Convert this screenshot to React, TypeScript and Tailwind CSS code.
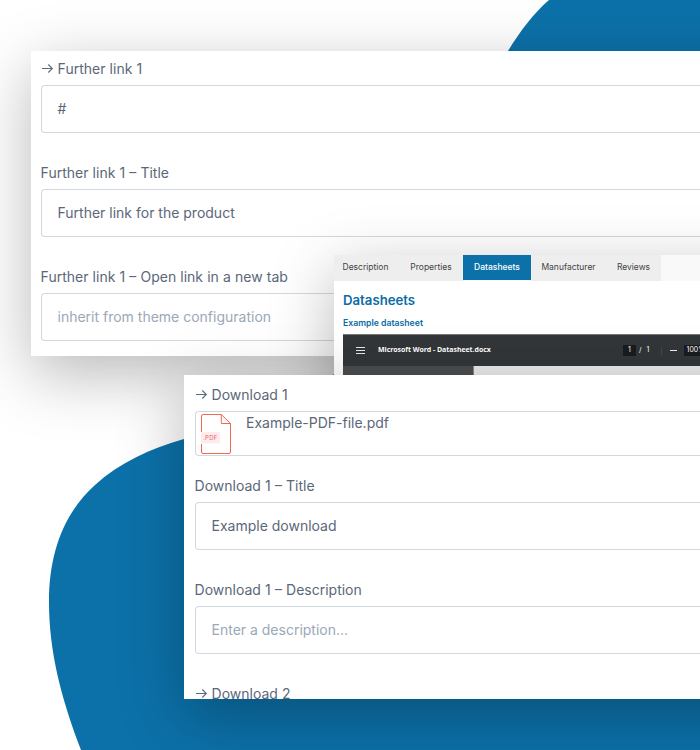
import type { ReactNode } from "react";

type FieldProps = {
  label: string;
  arrow?: boolean;
  children?: ReactNode;
};

const ArrowIcon = () => (
  <svg width="13" height="12" viewBox="0 0 13 12" fill="none" stroke="#5b6b7f" strokeWidth="1.1" className="mr-1">
    <path d="M1 6.5H11.3M7.3 2.5L11.3 6.5L7.3 10.5" />
  </svg>
);

const PdfIcon = () => (
  <svg width="30" height="40" viewBox="0 0 30 40" fill="none">
    <path
      d="M.5 18V2Q.5.5 2 .5H20.3L29.5 9.5V38Q29.5 39.5 28 39.5H2Q.5 39.5.5 38V30M20.3.5V9.5H29.5"
      stroke="#f4674f"
    />
    <rect y="18" width="19" height="11.5" fill="#fdeceb" />
    <text x="2.2" y="26" fontSize="6" letterSpacing=".2" fill="#f0616d" fontFamily="Inter, sans-serif">
      .PDF
    </text>
  </svg>
);

const Label = ({ label, arrow }: FieldProps) => (
  <div className="-ml-[0.4px] flex h-6 items-center whitespace-nowrap [word-spacing:0.2px]">
    {arrow && <ArrowIcon />}
    {label}
  </div>
);

const Field = ({ label, arrow, children }: FieldProps) => (
  <div>
    <Label label={label} arrow={arrow} />
    <div className="mt-[5px] flex h-12 items-center rounded-l border border-r-0 border-[#d1d9e0] pb-[2px] pl-[15.5px]">
      {children}
    </div>
  </div>
);

const tabs = [
  { name: "Description", width: "w-[65px] pr-[2px]" },
  { name: "Properties", width: "w-[64px]" },
  { name: "Datasheets", width: "w-[68px]" },
  { name: "Manufacturer", width: "w-[75px]" },
  { name: "Reviews", width: "w-[55px]" },
];

const LinksCard = () => (
  <section className="absolute left-[31px] top-[51px] h-[305px] w-[760px] bg-white pl-[10px] pt-[5px] shadow-[0_18px_60px_rgba(0,0,0,0.28)]">
    <div className="flex flex-col gap-[27px]">
      <Field label="Further link 1" arrow>
        #
      </Field>
      <Field label="Further link 1 – Title">Further link for the product</Field>
      <Field label="Further link 1 – Open link in a new tab">
        <span className="text-[#9aa8b8]">inherit from theme configuration</span>
      </Field>
    </div>
  </section>
);

const DatasheetCard = () => (
  <section className="absolute left-[334px] top-[255px] h-[260px] w-[460px] bg-white shadow-[0_18px_60px_rgba(0,0,0,0.28)]">
    <nav className="flex h-[26px] bg-[#f9f9f9] text-[8.5px] text-[#444]">
      {tabs.map((tab) => (
        <div
          key={tab.name}
          className={
            tab.name === "Datasheets"
              ? `${tab.width} flex h-[25px] items-center justify-center bg-[#0c71a9] font-medium text-white`
              : `${tab.width} flex items-center justify-center bg-[#eee] pb-px`
          }
        >
          {tab.name}
        </div>
      ))}
    </nav>
    <div className="pl-[9px]">
      <h2 className="mt-[9px] text-[13.2px] leading-5 font-semibold text-[#0c6ca5]">Datasheets</h2>
      <h3 className="mt-[7px] text-[8.7px] leading-3 font-semibold text-[#0c6ca5]">Example datasheet</h3>
      <div className="mt-[5px] flex h-8 items-center border-t border-[#777] bg-[#323639] text-[7px] text-white">
        <svg width="9" height="8" viewBox="0 0 9 8" stroke="#e8e8e8" className="mb-[2px] ml-[13px]">
          <path d="M0 1.5H9M0 4.5H9M0 7.5H9" />
        </svg>
        <span className="ml-[13px] w-[245px] font-['Open_Sans',sans-serif] text-[7px] font-bold tracking-[-0.05px]">
          Microsoft Word - Datasheet.docx
        </span>
        <span className="flex h-[11px] w-[13px] items-center justify-center bg-[#191b1c]">1</span>
        <span className="ml-[3px]">/</span>
        <span className="ml-[5px] w-[14px]">1</span>
        <span className="h-2 w-px bg-[#45494c]" />
        <span className="ml-2 h-px w-[7px] bg-[#eee]" />
        <span className="ml-[7px] flex h-[11px] w-6 items-center bg-[#191b1c] pl-[3px]">100%</span>
      </div>
      <div className="flex h-24">
        <div className="w-[131px] border-r border-[#888] bg-[#4a4d4f]" />
        <div className="flex-1 bg-[#e9e9e9]" />
      </div>
    </div>
  </section>
);

const DownloadsCard = () => (
  <section className="absolute left-[184px] top-[375px] h-[324px] w-[600px] bg-white shadow-[0_18px_60px_rgba(0,0,0,0.28)]">
    <div className="h-full overflow-hidden pl-[11px] pt-[7px]">
      <Label label="Download 1" arrow />
      <div className="mt-[5px] flex h-[45px] rounded-l border border-r-0 border-[#d1d9e0] pl-[5px] pt-[2px]">
        <PdfIcon />
        <span className="ml-[15px] leading-[18px]">Example-PDF-file.pdf</span>
      </div>
      <div className="mt-[17px] flex flex-col gap-[27px]">
        <Field label="Download 1 – Title">Example download</Field>
        <Field label="Download 1 – Description">
          <span className="text-[#9aa8b8]">Enter a description...</span>
        </Field>
        <Label label="Download 2" arrow />
      </div>
    </div>
  </section>
);

export default function App() {
  return (
    <main className="relative h-[750px] w-[700px] overflow-hidden bg-white font-[Inter,sans-serif] text-[14px] text-[#5b6779]">
      <svg width="700" height="750" viewBox="0 0 700 750" className="block">
        <path
          d="M81 750C61 698 49 651 49 602C49 551 65 512 95 485C119 463 151 448 184 439C245 422 299 405 334 374C400 315 446 160 508 51C521 30 533 14 549 0H700V750Z"
          fill="#0c71a9"
        />
      </svg>
      <LinksCard />
      <DatasheetCard />
      <DownloadsCard />
    </main>
  );
}
